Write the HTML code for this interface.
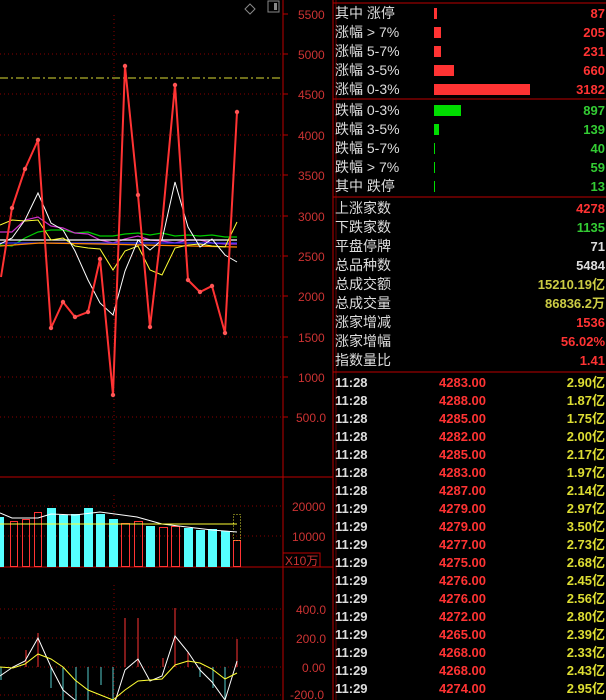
<!DOCTYPE html><html><head><meta charset="utf-8"><style>
body{margin:0;background:#000;width:606px;height:700px;overflow:hidden;position:relative;font-family:"Liberation Sans","Noto Sans CJK SC",sans-serif}
.r{position:absolute;left:335px;width:271px;height:19px;font-size:14px;line-height:19px;color:#ddd;white-space:nowrap}
.r .v{position:absolute;right:1px;top:0;font-weight:bold;font-size:13px}
.t{position:absolute;left:335px;width:271px;height:18px;font-size:13px;line-height:18px;font-weight:bold;white-space:nowrap}
.t .a{position:absolute;left:0;color:#ddd}.t .b{position:absolute;left:104px;color:#f33}.t .c{position:absolute;right:1px;color:#dd3}
.bar{position:absolute;height:11px;top:4px;left:99px}
</style></head><body>
<svg width="606" height="700" style="position:absolute;left:0;top:0">
<g stroke="#800" stroke-dasharray="1,3" stroke-width="1">
<line x1="0" y1="54" x2="283" y2="54"/><line x1="0" y1="94" x2="283" y2="94"/><line x1="0" y1="135" x2="283" y2="135"/><line x1="0" y1="175" x2="283" y2="175"/><line x1="0" y1="216" x2="283" y2="216"/><line x1="0" y1="256" x2="283" y2="256"/><line x1="0" y1="296" x2="283" y2="296"/><line x1="0" y1="337" x2="283" y2="337"/><line x1="0" y1="377" x2="283" y2="377"/><line x1="0" y1="417" x2="283" y2="417"/>
<line x1="114" y1="15" x2="114" y2="465"/><line x1="114" y1="495" x2="114" y2="567"/><line x1="114" y1="585" x2="114" y2="700"/>
<line x1="0" y1="506" x2="283" y2="506"/><line x1="0" y1="536" x2="283" y2="536"/>
<line x1="0" y1="609" x2="283" y2="609"/><line x1="0" y1="638" x2="283" y2="638"/><line x1="0" y1="667" x2="283" y2="667"/><line x1="0" y1="695" x2="283" y2="695"/>
</g>
<line x1="0" y1="78" x2="283" y2="78" stroke="#dd3" stroke-dasharray="8,3,2,3"/>
<line x1="283" y1="0" x2="283" y2="700" stroke="#b00"/>
<line x1="0" y1="477" x2="333" y2="477" stroke="#b00"/><line x1="0" y1="567" x2="333" y2="567" stroke="#b00"/>
<line x1="333" y1="0" x2="333" y2="700" stroke="#b00"/><line x1="336" y1="0" x2="336" y2="700" stroke="#600"/>
<line x1="333" y1="3" x2="606" y2="3" stroke="#b00"/><line x1="333" y1="99" x2="606" y2="99" stroke="#b00"/><line x1="333" y1="197" x2="606" y2="197" stroke="#b00"/><line x1="333" y1="372" x2="606" y2="372" stroke="#b00"/>
<g stroke="#b00"><line x1="283" y1="14" x2="288" y2="14"/><line x1="283" y1="54" x2="288" y2="54"/><line x1="283" y1="94" x2="288" y2="94"/><line x1="283" y1="135" x2="288" y2="135"/><line x1="283" y1="175" x2="288" y2="175"/><line x1="283" y1="216" x2="288" y2="216"/><line x1="283" y1="256" x2="288" y2="256"/><line x1="283" y1="296" x2="288" y2="296"/><line x1="283" y1="337" x2="288" y2="337"/><line x1="283" y1="377" x2="288" y2="377"/><line x1="283" y1="417" x2="288" y2="417"/></g>
<g fill="#c33" font-size="12" font-family="Liberation Sans">
<text x="298" y="19">5500</text><text x="298" y="59">5000</text><text x="298" y="99">4500</text><text x="298" y="140">4000</text><text x="298" y="180">3500</text><text x="298" y="221">3000</text><text x="298" y="261">2500</text><text x="298" y="301">2000</text><text x="298" y="342">1500</text><text x="298" y="382">1000</text><text x="296" y="422">500.0</text>
<text x="292" y="511">20000</text><text x="292" y="541">10000</text><text x="285" y="565" fill="#c33">X10万</text>
<text x="296" y="614">400.0</text><text x="296" y="643">200.0</text><text x="302" y="672">0.00</text><text x="290" y="699">-200.0</text>
</g>
<rect x="283" y="553" width="37" height="14" fill="none" stroke="#b00"/>
<path d="M250 4 l5 5 -5 5 -5-5z" fill="none" stroke="#888"/><rect x="268" y="1" width="11" height="11" fill="none" stroke="#888"/><rect x="274" y="3" width="3" height="7" fill="#888"/>
<!-- MA lines -->
<polyline fill="none" stroke="#0c0" stroke-width="1.2" points="0,245 12,246 25,238 38,232 51,230 63,230 75,233 88,232 100,236 113,236 125,234 138,233 150,235 162,233 175,236 188,235 200,236 212,235 225,237 237,237"/>
<polyline fill="none" stroke="#c3c" stroke-width="1.2" points="0,232 12,232 25,220 38,217 51,226 63,228 75,233 88,234 100,240 113,243 125,239 138,236 150,240 162,241 175,243 188,240 200,240 212,243 225,244 237,244"/>
<polyline fill="none" stroke="#fff" stroke-width="1.2" points="0,240 237,240"/>
<polyline fill="none" stroke="#33f" stroke-width="1.2" points="0,243 237,243"/>
<polyline fill="none" stroke="#f80" stroke-width="1.2" points="0,246 40,243 100,244 237,247"/>
<polyline fill="none" stroke="#ff3" stroke-width="1" points="0,225 12,220 25,221 38,220 51,240 63,238 75,246 88,248 100,249 113,270 125,251 138,246 150,270 162,275 175,248 188,245 200,244 212,246 225,247 237,222"/>
<polyline fill="none" stroke="#fff" stroke-width="1" points="0,244 12,238 25,220 38,193 51,223 63,230 75,251 88,280 100,303 113,315 125,271 138,240 150,250 162,240 175,182 188,227 200,247 212,239 225,255 237,262"/>
<polyline fill="none" stroke="#f33" stroke-width="2" points="1,277 12,208 25,169 38,140 51,328 63,302 75,317 88,312 100,259 113,395 125,66 138,195 150,327 162,225 175,85 188,280 200,292 212,286 225,333 237,112"/>
<g fill="#f55"><circle cx="12" cy="208" r="2.2"/><circle cx="25" cy="169" r="2.2"/><circle cx="38" cy="140" r="2.2"/><circle cx="51" cy="328" r="2.2"/><circle cx="63" cy="302" r="2.2"/><circle cx="75" cy="317" r="2.2"/><circle cx="88" cy="312" r="2.2"/><circle cx="100" cy="259" r="2.2"/><circle cx="113" cy="395" r="2.2"/><circle cx="125" cy="66" r="2.2"/><circle cx="138" cy="195" r="2.2"/><circle cx="150" cy="327" r="2.2"/><circle cx="175" cy="85" r="2.2"/><circle cx="188" cy="280" r="2.2"/><circle cx="200" cy="292" r="2.2"/><circle cx="212" cy="286" r="2.2"/><circle cx="225" cy="333" r="2.2"/><circle cx="237" cy="112" r="2.2"/></g>
<!-- volume -->
<g fill="#5ff"><rect x="0" y="517" width="4" height="50"/><rect x="47" y="508" width="9" height="59"/><rect x="59" y="515" width="9" height="52"/><rect x="71" y="514" width="9" height="53"/><rect x="84" y="508" width="9" height="59"/><rect x="96" y="514" width="9" height="53"/><rect x="109" y="519" width="9" height="48"/><rect x="146" y="526" width="9" height="41"/><rect x="184" y="528" width="9" height="39"/><rect x="196" y="530" width="9" height="37"/><rect x="208" y="529" width="9" height="38"/><rect x="221" y="531" width="9" height="36"/></g>
<g fill="none" stroke="#f33"><rect x="10.5" y="521.5" width="7" height="45"/><rect x="22.5" y="519.5" width="7" height="47"/><rect x="34.5" y="512.5" width="7" height="54"/><rect x="121.5" y="523.5" width="8" height="43"/><rect x="134.5" y="521.5" width="8" height="45"/><rect x="159.5" y="527.5" width="8" height="39"/><rect x="171.5" y="526.5" width="8" height="40"/><rect x="233.5" y="540.5" width="7" height="26"/></g>
<rect x="233.5" y="514.5" width="7" height="26" fill="none" stroke="#dd3" stroke-dasharray="1,2"/>
<polyline fill="none" stroke="#fff" points="0,513 12,518 38,518 51,514 75,515 100,512 137,517 162,524 212,530 237,532"/>
<polyline fill="none" stroke="#ff3" points="0,524 237,524"/>
<!-- macd -->
<g stroke="#5cc"><line x1="1" y1="667" x2="1" y2="680"/><line x1="51" y1="667" x2="51" y2="688"/><line x1="63" y1="667" x2="63" y2="700"/><line x1="76" y1="667" x2="76" y2="700"/><line x1="88" y1="667" x2="88" y2="700"/><line x1="101" y1="667" x2="101" y2="685"/><line x1="113" y1="667" x2="113" y2="700"/><line x1="200" y1="667" x2="200" y2="677"/><line x1="213" y1="667" x2="213" y2="688"/><line x1="225" y1="667" x2="225" y2="700"/></g>
<g stroke="#f33"><line x1="26" y1="667" x2="26" y2="650"/><line x1="38" y1="667" x2="38" y2="633"/><line x1="125" y1="667" x2="125" y2="618"/><line x1="138" y1="667" x2="138" y2="618"/><line x1="163" y1="667" x2="163" y2="658"/><line x1="175" y1="667" x2="175" y2="608"/><line x1="188" y1="667" x2="188" y2="652"/><line x1="237" y1="667" x2="237" y2="639"/></g>
<polyline fill="none" stroke="#fff" points="0,676 13,667 25,661 38,638 51,667 63,690 75,700 88,708 113,708 125,670 138,659 150,681 162,676 175,636 188,652 200,670 212,682 225,700 237,661"/>
<polyline fill="none" stroke="#ff3" points="0,667 13,668 25,664 38,654 51,659 63,667 75,680 88,690 113,700 125,690 138,681 150,680 162,679 175,665 188,661 200,663 212,669 225,679 237,673"/>
</svg>
<div class="r" style="top:4px">其中 涨停<div class="bar" style="width:3px;background:#f33"></div><span class="v" style="color:#f33">87</span></div>
<div class="r" style="top:23px">涨幅 &gt; 7%<div class="bar" style="width:7px;background:#f33"></div><span class="v" style="color:#f33">205</span></div>
<div class="r" style="top:42px">涨幅 5-7%<div class="bar" style="width:7px;background:#f33"></div><span class="v" style="color:#f33">231</span></div>
<div class="r" style="top:61px">涨幅 3-5%<div class="bar" style="width:20px;background:#f33"></div><span class="v" style="color:#f33">660</span></div>
<div class="r" style="top:80px">涨幅 0-3%<div class="bar" style="width:96px;background:#f33"></div><span class="v" style="color:#f33">3182</span></div>
<div class="r" style="top:101px">跌幅 0-3%<div class="bar" style="width:27px;background:#0d0"></div><span class="v" style="color:#3c3">897</span></div>
<div class="r" style="top:120px">跌幅 3-5%<div class="bar" style="width:5px;background:#0d0"></div><span class="v" style="color:#3c3">139</span></div>
<div class="r" style="top:139px">跌幅 5-7%<div class="bar" style="width:1px;background:#0d0"></div><span class="v" style="color:#3c3">40</span></div>
<div class="r" style="top:158px">跌幅 &gt; 7%<div class="bar" style="width:1px;background:#0d0"></div><span class="v" style="color:#3c3">59</span></div>
<div class="r" style="top:177px">其中 跌停<div class="bar" style="width:1px;background:#0d0"></div><span class="v" style="color:#3c3">13</span></div>
<div class="r" style="top:199px">上涨家数<span class="v" style="color:#f33">4278</span></div>
<div class="r" style="top:218px">下跌家数<span class="v" style="color:#3c3">1135</span></div>
<div class="r" style="top:237px">平盘停牌<span class="v" style="color:#ddd">71</span></div>
<div class="r" style="top:256px">总品种数<span class="v" style="color:#ddd">5484</span></div>
<div class="r" style="top:275px">总成交额<span class="v" style="color:#cc4">15210.19亿</span></div>
<div class="r" style="top:294px">总成交量<span class="v" style="color:#cc4">86836.2万</span></div>
<div class="r" style="top:313px">涨家增减<span class="v" style="color:#f33">1536</span></div>
<div class="r" style="top:332px">涨家增幅<span class="v" style="color:#f33">56.02%</span></div>
<div class="r" style="top:351px">指数量比<span class="v" style="color:#f33">1.41</span></div>
<div class="t" style="top:374px"><span class="a">11:28</span><span class="b">4283.00</span><span class="c">2.90亿</span></div>
<div class="t" style="top:392px"><span class="a">11:28</span><span class="b">4288.00</span><span class="c">1.87亿</span></div>
<div class="t" style="top:410px"><span class="a">11:28</span><span class="b">4285.00</span><span class="c">1.75亿</span></div>
<div class="t" style="top:428px"><span class="a">11:28</span><span class="b">4282.00</span><span class="c">2.00亿</span></div>
<div class="t" style="top:446px"><span class="a">11:28</span><span class="b">4285.00</span><span class="c">2.17亿</span></div>
<div class="t" style="top:464px"><span class="a">11:28</span><span class="b">4283.00</span><span class="c">1.97亿</span></div>
<div class="t" style="top:482px"><span class="a">11:28</span><span class="b">4287.00</span><span class="c">2.14亿</span></div>
<div class="t" style="top:500px"><span class="a">11:29</span><span class="b">4279.00</span><span class="c">2.97亿</span></div>
<div class="t" style="top:518px"><span class="a">11:29</span><span class="b">4279.00</span><span class="c">3.50亿</span></div>
<div class="t" style="top:536px"><span class="a">11:29</span><span class="b">4277.00</span><span class="c">2.73亿</span></div>
<div class="t" style="top:554px"><span class="a">11:29</span><span class="b">4275.00</span><span class="c">2.68亿</span></div>
<div class="t" style="top:572px"><span class="a">11:29</span><span class="b">4276.00</span><span class="c">2.45亿</span></div>
<div class="t" style="top:590px"><span class="a">11:29</span><span class="b">4276.00</span><span class="c">2.56亿</span></div>
<div class="t" style="top:608px"><span class="a">11:29</span><span class="b">4272.00</span><span class="c">2.80亿</span></div>
<div class="t" style="top:626px"><span class="a">11:29</span><span class="b">4265.00</span><span class="c">2.39亿</span></div>
<div class="t" style="top:644px"><span class="a">11:29</span><span class="b">4268.00</span><span class="c">2.33亿</span></div>
<div class="t" style="top:662px"><span class="a">11:29</span><span class="b">4268.00</span><span class="c">2.43亿</span></div>
<div class="t" style="top:680px"><span class="a">11:29</span><span class="b">4274.00</span><span class="c">2.95亿</span></div>
</body></html>
